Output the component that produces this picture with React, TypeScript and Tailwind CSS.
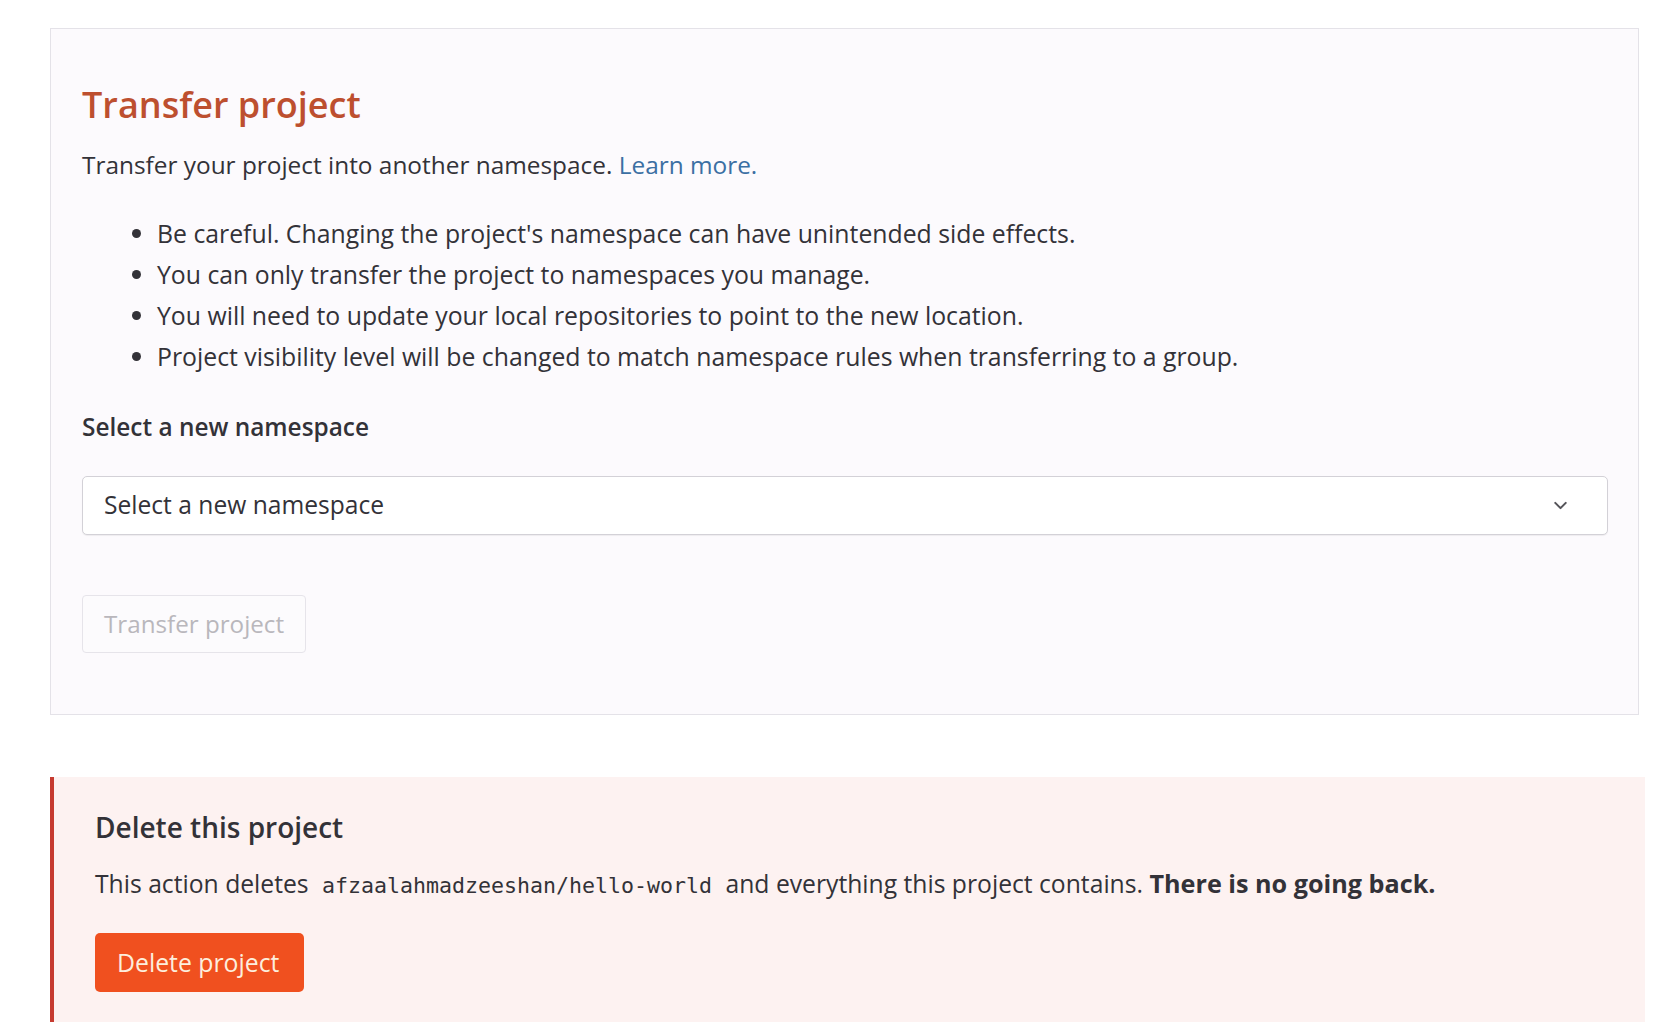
import { ChevronDown } from 'lucide-react';

const warnings = [
    "Be careful. Changing the project's namespace can have unintended side effects.",
    "You can only transfer the project to namespaces you manage.",
    "You will need to update your local repositories to point to the new location.",
    "Project visibility level will be changed to match namespace rules when transferring to a group.",
];

function TransferPanel() {
    return (
        <section className="border border-[#e4e2e8] bg-[#fcfafd] pl-[31px] pr-[30px] pt-[56px] pb-[61px]">
            <h2 className="text-[36px] leading-[40px] font-semibold text-[#bd4f2f]">Transfer project</h2>
            <p className="mt-[23px] text-[24.4px] leading-[34px] text-[#333238]">
                Transfer your project into another namespace. <a href="#" className="text-[#3b6fa3]">Learn more.</a>
            </p>
            <ul className="mt-[31px] pl-[75px] list-disc text-[24.8px] leading-[41px] text-[#333238] marker:text-[#333238]">
                {warnings.map((w, i) => (
                    <li key={i}>{w}</li>
                ))}
            </ul>
            <label className="block mt-[33px] text-[24.4px] leading-[34px] font-semibold text-[#333238]">Select a new namespace</label>
            <button className="mt-[32px] w-full h-[59px] flex items-center justify-between pl-[21px] pr-[36px] bg-white border border-[#d3d1d7] rounded-[5px] shadow-[0_1px_1px_rgba(0,0,0,0.06)] text-[24.6px] text-[#333238]">
                <span>Select a new namespace</span>
                <ChevronDown size={21} strokeWidth={2.4} className="text-[#555459]" />
            </button>
            <button disabled className="mt-[60px] h-[58px] w-[224px] flex items-center pl-[21px] border border-[#e6e4ea] bg-[#fcfbfd] rounded-[4px] text-[24.2px] text-[#b9b7bc]">
                Transfer project
            </button>
        </section>
    );
}

function DeletePanel() {
    return (
        <section className="mt-[62px] mr-[-6px] border-l-4 border-[#c63b30] bg-[#fdf2f1] pl-[41px] pt-[33px] pb-[30px]">
            <h3 className="text-[28px] leading-[34px] font-semibold text-[#333238]">Delete this project</h3>
            <p className="mt-[22px] text-[24.7px] leading-[34px] text-[#333238]">
                This action deletes{' '}
                <code className="px-[7px] text-[21.6px] font-['DejaVu_Sans_Mono',monospace] text-[#333238]">afzaalahmadzeeshan/hello-world</code>
                {' '}and everything this project contains. <strong className="font-bold text-[25.2px]">There is no going back.</strong>
            </p>
            <button className="mt-[30px] h-[59px] w-[209px] flex items-center pl-[22px] bg-[#f0501f] rounded-[5px] text-[24.8px] text-[#fdeedd]">
                Delete project
            </button>
        </section>
    );
}

export default function App() {
    return (
        <div className="min-h-[1036px] bg-white pt-[28px] pl-[50px] pr-[15px] font-['Open_Sans',sans-serif]">
            <TransferPanel />
            <DeletePanel />
        </div>
    );
}
